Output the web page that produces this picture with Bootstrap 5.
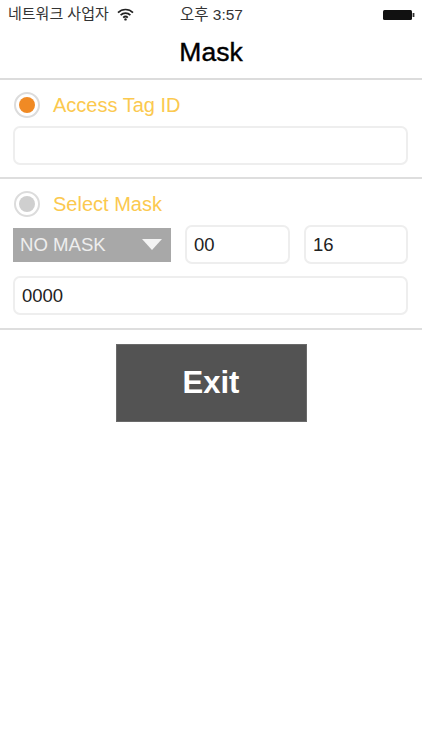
<!DOCTYPE html>
<html lang="ko">
<head>
<meta charset="utf-8">
<title>Mask</title>
<link href="https://cdn.jsdelivr.net/npm/bootstrap@5.3.0/dist/css/bootstrap.min.css" rel="stylesheet">
<style>
html, body { background: #fff; font-family: "Liberation Sans", "Noto Sans CJK KR", sans-serif; }
.statusline { height: 29px; padding: 0 7px 0 8px; font-size: 15px; color: #333; position: relative; }
.statusline .clock { position: absolute; left: 180px; top: 6px; line-height: 18px; font-size: 15.5px; }
.titlebar { height: 51px; font-size: 26.5px; color: #000; -webkit-text-stroke: .4px #000; padding-bottom: 1px; border-bottom: 2px solid #dcdcdc; }
.sect { padding: 0 14px 0 13px; }
.sect-a { height: 99px; border-bottom: 2px solid #dedede; padding-top: 12px; }
.sect-b { height: 151px; border-bottom: 2px solid #dedede; padding-top: 12px; }
.gap-val { margin-top: 12px; }
.radio-ring { width: 26px; height: 26px; border: 2px solid #dcdcdc; border-radius: 50%; background: #fff; margin-left: 1px; }
.radio-dot { width: 16px; height: 16px; border-radius: 50%; }
.dot-on { background: #f08a24; }
.dot-off { background: #cfcfcf; }
.opt-label { font-size: 20px; color: #fbc94f; margin-left: 13px; line-height: 26px; }
.field.form-control { height: 39px; border: 2px solid #eeeeee; border-radius: 7px; font-size: 18.5px; color: #222; padding: 0 7px; font-family: "Liberation Sans", sans-serif; }
.mask-select { width: 158px; flex: none; height: 34px; background: #a8a8a8; color: #eee; font-size: 18.6px; padding: 0 9px 0 7px; }
.small-field.form-control { width: 105px; flex: none; margin-left: 14px; }
.small-field.narrower.form-control { width: 104px; }
.exit-btn.btn { width: 191px; height: 78px; background: #535353; color: #fff; border: 1px solid #6a6a6a; border-radius: 0; font-size: 31px; font-weight: 700; padding: 0; }
.exit-wrap { padding-top: 14px; }
</style>
</head>
<body>
<div class="statusline d-flex align-items-center justify-content-between">
  <div class="d-flex align-items-center gap-2">
    <span class="carrier">네트워크 사업자</span>
    <svg width="17" height="13" viewBox="0 0 17 13" aria-hidden="true">
      <path d="M1 4.6a10.6 10.6 0 0 1 15 0" fill="none" stroke="#222" stroke-width="1.7"/>
      <path d="M3.6 7.2a7 7 0 0 1 9.8 0" fill="none" stroke="#222" stroke-width="1.7"/>
      <path d="M6.2 9.6a3.3 3.3 0 0 1 4.6 0" fill="none" stroke="#222" stroke-width="1.7"/>
      <circle cx="8.5" cy="11.4" r="1.2" fill="#222"/>
    </svg>
  </div>
  <span class="clock">오후 3:57</span>
  <svg width="32" height="12" viewBox="0 0 32 12" aria-hidden="true">
    <rect x="0" y="1" width="29" height="10" rx="1.5" fill="#111"/>
    <rect x="29.6" y="4" width="1.8" height="4" fill="#333"/>
  </svg>
</div>
<div class="titlebar d-flex align-items-center justify-content-center">Mask</div>

<div class="sect sect-a">
  <div class="d-flex align-items-center">
    <span class="radio-ring d-flex align-items-center justify-content-center"><span class="radio-dot dot-on"></span></span>
    <span class="opt-label">Access Tag ID</span>
  </div>
  <input class="form-control field mt-2" type="text" value="" aria-label="Access Tag ID">
</div>

<div class="sect sect-b">
  <div class="d-flex align-items-center">
    <span class="radio-ring d-flex align-items-center justify-content-center"><span class="radio-dot dot-off"></span></span>
    <span class="opt-label">Select Mask</span>
  </div>
  <div class="d-flex align-items-center mt-2">
    <div class="mask-select d-flex align-items-center justify-content-between">
      <span>NO MASK</span>
      <svg width="20" height="11" viewBox="0 0 20 11" aria-hidden="true"><path d="M0 0H20L10 11Z" fill="#f4f4f4"/></svg>
    </div>
    <input class="form-control field small-field" type="text" value="00" aria-label="Mask start">
    <input class="form-control field small-field narrower" type="text" value="16" aria-label="Mask length">
  </div>
  <input class="form-control field gap-val" type="text" value="0000" aria-label="Mask value">
</div>

<div class="exit-wrap d-flex justify-content-center">
  <button type="button" class="btn exit-btn">Exit</button>
</div>
<script src="https://cdn.jsdelivr.net/npm/bootstrap@5.3.0/dist/js/bootstrap.bundle.min.js"></script>
</body>
</html>
